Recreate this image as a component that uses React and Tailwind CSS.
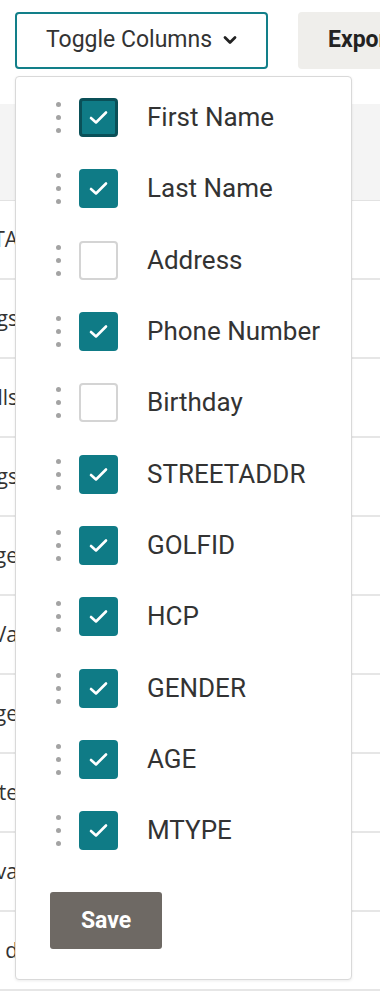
import React from "react";

const items = [
  { label: "First Name", checked: true, focus: true },
  { label: "Last Name", checked: true },
  { label: "Address", checked: false },
  { label: "Phone Number", checked: true },
  { label: "Birthday", checked: false },
  { label: "STREETADDR", checked: true },
  { label: "GOLFID", checked: true },
  { label: "HCP", checked: true },
  { label: "GENDER", checked: true },
  { label: "AGE", checked: true },
  { label: "MTYPE", checked: true },
];

const cells = ["STA", "Springs", "Hills", "Springs", "Village", "Va", "Village", "Estate", "Java", "d"];

function Handle() {
  return (
    <div className="flex flex-col items-center gap-[8px] w-[6px]">
      <span className="block w-[5px] h-[5px] rounded-full bg-[#a3a3a3]" />
      <span className="block w-[5px] h-[5px] rounded-full bg-[#a3a3a3]" />
      <span className="block w-[5px] h-[5px] rounded-full bg-[#a3a3a3]" />
    </div>
  );
}

function Box({ checked, focus }) {
  if (!checked) {
    return <div className="w-[39px] h-[39px] rounded-[4px] border-2 border-[#d4d4d4] bg-white" />;
  }
  return (
    <div
      className={
        "w-[39px] h-[39px] rounded-[4px] bg-[#0f7b86] flex items-center justify-center " +
        (focus ? "border-[3px] border-[#0a5058]" : "")
      }
    >
      <svg width="19" height="15" viewBox="0 0 19 15" fill="none">
        <path d="M2 8 L7 12.5 L17 2.5" stroke="white" strokeWidth="2.6" strokeLinecap="round" strokeLinejoin="round" />
      </svg>
    </div>
  );
}

export default function App() {
  return (
    <div className="relative w-[380px] h-[1000px] bg-white overflow-hidden" style={{ fontFamily: "Roboto, 'Liberation Sans', sans-serif" }}>
      {/* top bar */}
      <div className="flex items-center h-[79px] pl-[15px] pt-[1px]">
        <button className="shrink-0 w-[253px] h-[57px] border-2 border-[#127f89] rounded-[4px] bg-white flex items-center justify-center gap-[11px] text-[23px] text-[#333]">
          <span>Toggle Columns</span>
          <svg width="14" height="10" viewBox="0 0 14 10" fill="none">
            <path d="M2 2.5 L7 7.5 L12 2.5" stroke="#222" strokeWidth="2.8" strokeLinecap="round" strokeLinejoin="round" />
          </svg>
        </button>
        <button className="shrink-0 ml-[30px] h-[57px] w-[140px] rounded-[4px] bg-[#efeeeb] flex items-center justify-start pl-[30px] text-[23px] font-bold text-[#222]">
          Export
        </button>
      </div>

      {/* table */}
      <div className="mt-[25px]">
        <div className="h-[97px] bg-[#f4f4f4] border-b border-[#e2e2e2]" />
        {cells.map((c, i) => (
          <div key={i} className="h-[79px] border-b-2 border-[#e6e6e6] flex items-center">
            <div className="w-[18px] overflow-hidden flex justify-end">
              <span className="whitespace-nowrap text-[21px] text-[#333]" style={{ fontFamily: "'Open Sans', sans-serif" }}>{c}</span>
            </div>
          </div>
        ))}
      </div>

      {/* dropdown */}
      <div className="absolute left-[15px] top-[76px] w-[337px] h-[904px] bg-white border border-[#d9d9d9] rounded-[4px] shadow-[0_1px_3px_rgba(0,0,0,0.08)] pt-[5px]">
        {items.map((it, i) => (
          <div key={i} className="h-[71.3px] flex items-center pl-[39px]">
            <Handle />
            <div className="ml-[18px]">
              <Box checked={it.checked} focus={it.focus} />
            </div>
            <span className="ml-[29px] text-[26px] text-[#333]">{it.label}</span>
          </div>
        ))}
        <div className="pl-[34px] mt-[26px]">
          <button className="w-[112px] h-[57px] rounded-[3px] bg-[#6e6964] text-white text-[23px] font-bold">Save</button>
        </div>
      </div>
    </div>
  );
}
